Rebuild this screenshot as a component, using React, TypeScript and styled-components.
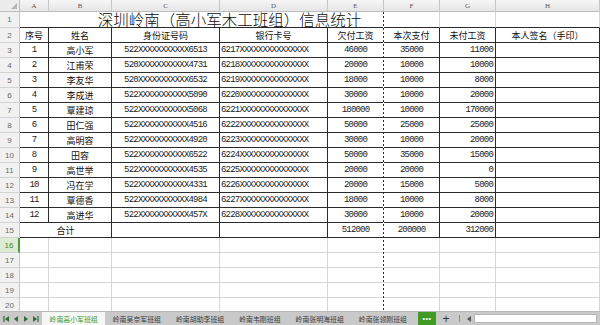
import React from 'react';
import styled, { createGlobalStyle } from 'styled-components';

const GlobalStyle = createGlobalStyle`
  html, body {
    margin: 0;
    padding: 0;
    background: #ffffff;
  }
  body {
    font-family: "Liberation Serif", "Noto Sans CJK SC", serif;
  }
`;

const colLetters = ['A', 'B', 'C', 'D', 'E', 'F', 'G', 'H'];

// [序号, 姓名, 身份证, 银行卡, 欠付, 本次, 未付]
const people = [
  ['1', '高小军', '522XXXXXXXXXXX6513', '6217XXXXXXXXXXXXXXX', '46000', '35000', '11000'],
  ['2', '江甫荣', '520XXXXXXXXXXX4731', '6218XXXXXXXXXXXXXXX', '20000', '10000', '10000'],
  ['3', '李友华', '520XXXXXXXXXXX6532', '6219XXXXXXXXXXXXXXX', '18000', '10000', '8000'],
  ['4', '李成进', '522XXXXXXXXXXX5090', '6220XXXXXXXXXXXXXXX', '30000', '10000', '20000'],
  ['5', '覃建琼', '522XXXXXXXXXXX5068', '6221XXXXXXXXXXXXXXX', '180000', '10000', '170000'],
  ['6', '田仁强', '522XXXXXXXXXXX4516', '6222XXXXXXXXXXXXXXX', '50000', '25000', '25000'],
  ['7', '高明容', '522XXXXXXXXXXX4920', '6223XXXXXXXXXXXXXXX', '30000', '10000', '20000'],
  ['8', '田容', '522XXXXXXXXXXX6522', '6224XXXXXXXXXXXXXXX', '50000', '35000', '15000'],
  ['9', '高世举', '522XXXXXXXXXXX4535', '6225XXXXXXXXXXXXXXX', '20000', '20000', '0'],
  ['10', '冯在学', '522XXXXXXXXXXX4331', '6226XXXXXXXXXXXXXXX', '20000', '15000', '5000'],
  ['11', '覃德香', '522XXXXXXXXXXX4984', '6227XXXXXXXXXXXXXXX', '18000', '10000', '8000'],
  ['12', '高进华', '522XXXXXXXXXXX457X', '6228XXXXXXXXXXXXXXX', '30000', '10000', '20000'],
];

const headers = ['序号', '姓名', '身份证号码', '银行卡号', '欠付工资', '本次支付', '未付工资', '本人签名（手印）'];

const sheetTabs = ['岭南高小军班组', '岭南吴奈军班组', '岭南胡助李班组', '岭南韦刚班组', '岭南张明海班组', '岭南张领刚班组'];

const Frame = styled.div`
  width: 600px;
  height: 325px;
  display: flex;
  flex-direction: column;
  overflow: hidden;
`;

const Sheet = styled.div`
  position: relative;
  flex: 1;
  overflow: hidden;
  display: grid;
  grid-template-columns: 20px 29px 63px 108px 108px 56px 56px 56px 104px;
  grid-template-rows: 12px 16px;
  grid-auto-rows: 15px;
`;

const Corner = styled.div`
  position: relative;
  box-sizing: border-box;
  background: #ececec;
  border-right: 1px solid #bdbdbd;
  border-bottom: 1px solid #bdbdbd;
  &::after {
    content: '';
    position: absolute;
    right: 2px;
    bottom: 2px;
    border-left: 6px solid transparent;
    border-bottom: 6px solid #b5b5b5;
  }
`;

const ColHead = styled.div`
  box-sizing: border-box;
  background: linear-gradient(#f6f6f6, #e6e6e6);
  border-right: 1px solid #c6c6c6;
  border-bottom: 1px solid #bdbdbd;
  display: flex;
  align-items: center;
  justify-content: center;
  font-family: "Liberation Serif", serif;
  font-size: 7px;
  color: #555;
`;

const RowHead = styled.div<{ $active?: boolean }>`
  box-sizing: border-box;
  background: ${p => (p.$active ? '#dcebd3' : '#f1f1f1')};
  border-right: ${p => (p.$active ? '2px solid #4f9a3a' : '1px solid #c6c6c6')};
  border-bottom: 1px solid #d2d2d2;
  display: flex;
  align-items: center;
  justify-content: center;
  font-family: "Liberation Sans", sans-serif;
  font-size: 8px;
  color: ${p => (p.$active ? '#3f8a2c' : '#6a6a6a')};
`;

type Edge = 'all' | 'bottom' | 'none';

const Cell = styled.div<{ $align?: 'left' | 'center' | 'right'; $edge?: Edge; $span?: number }>`
  box-sizing: border-box;
  grid-column: ${p => (p.$span ? `span ${p.$span}` : 'auto')};
  display: flex;
  align-items: center;
  justify-content: ${p => (p.$align === 'left' ? 'flex-start' : p.$align === 'right' ? 'flex-end' : 'center')};
  padding: 0 ${p => (p.$align === 'right' ? '2px' : '1px')};
  overflow: hidden;
  white-space: nowrap;
  border-right: 1px solid ${p => (p.$edge === 'all' ? '#2b2b2b' : '#d6d6d6')};
  border-bottom: 1px solid ${p => (p.$edge === 'none' ? '#d6d6d6' : '#2b2b2b')};
  font-family: "Liberation Serif", "Noto Sans CJK SC", serif;
  font-size: 9px;
  color: #111;
`;

const Title = styled(Cell)`
  align-items: flex-end;
  font-family: "Noto Sans CJK SC", sans-serif;
  font-size: 15.5px;
  font-weight: 300;
  line-height: 16px;
  color: #0c0c0c;
  overflow: visible;
`;

const Mono = styled.span`
  font-family: "Liberation Mono", monospace;
  font-size: 9px;
  letter-spacing: -0.8px;
  color: #222;
`;

const PageBreak = styled.div`
  position: absolute;
  left: 383px;
  top: 12px;
  bottom: 0;
  width: 1px;
  background: repeating-linear-gradient(to bottom, #2b2b2b 0 2px, #ffffff 2px 4px);
`;

const TabBar = styled.div`
  height: 14px;
  flex: none;
  display: flex;
  align-items: stretch;
  background: #c9c9c9;
  border-top: 1px solid #b8b8b8;
  box-sizing: border-box;
`;

const NavArrows = styled.div`
  width: 42px;
  display: flex;
  align-items: center;
  justify-content: space-around;
  padding: 0 2px;
  box-sizing: border-box;
`;

const TabStrip = styled.div`
  width: 376px;
  display: flex;
  overflow: hidden;
`;

const Tab = styled.div<{ $active?: boolean }>`
  flex: none;
  display: flex;
  align-items: center;
  padding: 0 7.5px;
  background: ${p => (p.$active ? '#f6f6f6' : 'transparent')};
  color: ${p => (p.$active ? '#3f9a2a' : '#3a3a3a')};
  font-family: "Noto Sans CJK SC", sans-serif;
  font-size: 6.9px;
  white-space: nowrap;
`;

const MoreButton = styled.div`
  width: 18px;
  background: #3f9b23;
  color: #ffffff;
  display: flex;
  align-items: center;
  justify-content: center;
  font-family: "Liberation Sans", sans-serif;
  font-size: 7px;
  letter-spacing: 0.5px;
`;

const AddButton = styled.div`
  width: 20px;
  display: flex;
  align-items: center;
  justify-content: center;
  font-family: "Liberation Sans", sans-serif;
  font-size: 12px;
  color: #333;
`;

const Divider = styled.div`
  width: 1px;
  margin: 3px 4px 3px 3px;
  background: #8a8a8a;
`;

const ScrollLeft = styled.div`
  width: 10px;
  display: flex;
  align-items: center;
  justify-content: center;
`;

const ScrollTrack = styled.div`
  flex: 1;
  margin: 2px 3px 2px 0;
  background: #ffffff;
  border: 1px solid #b5b5b5;
`;

function Arrow({ dir, bar }: { dir: 'l' | 'r'; bar?: boolean }) {
  const tri = dir === 'l' ? 'M6 1 L2 4 L6 7 Z' : 'M2 1 L6 4 L2 7 Z';
  const line = dir === 'l' ? 'M1 1 V7' : 'M7 1 V7';
  return (
    <svg width="8" height="8" viewBox="0 0 8 8">
      <path d={tri} fill="#2f6d33" />
      {bar && <path d={line} stroke="#2f6d33" strokeWidth="1.2" />}
    </svg>
  );
}

export default function App() {
  const extraRows = [16, 17, 18, 19, 20];

  return (
    <Frame>
      <GlobalStyle />
      <Sheet>
        <Corner />
        {colLetters.map(c => (
          <ColHead key={c}>{c}</ColHead>
        ))}

        {/* row 1 – title */}
        <RowHead>1</RowHead>
        <Title $span={6} $edge="bottom">深圳岭南（高小军木工班组）信息统计</Title>
        <Cell $edge="bottom" />
        <Cell $edge="bottom" />

        {/* row 2 – headers */}
        <RowHead>2</RowHead>
        {headers.map(h => (
          <Cell key={h} $edge="all">{h}</Cell>
        ))}

        {people.map((p, i) => (
          <React.Fragment key={p[0]}>
            <RowHead>{i + 3}</RowHead>
            <Cell $edge="all"><Mono>{p[0]}</Mono></Cell>
            <Cell $edge="all">{p[1]}</Cell>
            <Cell $edge="all"><Mono>{p[2]}</Mono></Cell>
            <Cell $edge="all" $align="left"><Mono>{p[3]}</Mono></Cell>
            <Cell $edge="all"><Mono>{p[4]}</Mono></Cell>
            <Cell $edge="all"><Mono>{p[5]}</Mono></Cell>
            <Cell $edge="all" $align="right"><Mono>{p[6]}</Mono></Cell>
            <Cell $edge="all" />
          </React.Fragment>
        ))}

        {/* row 15 – totals */}
        <RowHead>15</RowHead>
        <Cell $edge="all" $span={2}>合计</Cell>
        <Cell $edge="all" />
        <Cell $edge="all" />
        <Cell $edge="all"><Mono>512000</Mono></Cell>
        <Cell $edge="all"><Mono>200000</Mono></Cell>
        <Cell $edge="all" $align="right"><Mono>312000</Mono></Cell>
        <Cell $edge="all" />

        {extraRows.map(r => (
          <React.Fragment key={r}>
            <RowHead $active={r === 16}>{r}</RowHead>
            {colLetters.map(c => (
              <Cell key={c} $edge="none" />
            ))}
          </React.Fragment>
        ))}

        <PageBreak />
      </Sheet>

      <TabBar>
        <NavArrows>
          <Arrow dir="l" bar />
          <Arrow dir="l" />
          <Arrow dir="r" />
          <Arrow dir="r" bar />
        </NavArrows>
        <TabStrip>
          {sheetTabs.map((t, i) => (
            <Tab key={t} $active={i === 0}>{t}</Tab>
          ))}
        </TabStrip>
        <MoreButton>•••</MoreButton>
        <AddButton>+</AddButton>
        <Divider />
        <ScrollLeft>
          <svg width="5" height="6" viewBox="0 0 5 6">
            <path d="M4 0 L0 3 L4 6 Z" fill="#555" />
          </svg>
        </ScrollLeft>
        <ScrollTrack />
      </TabBar>
    </Frame>
  );
}
